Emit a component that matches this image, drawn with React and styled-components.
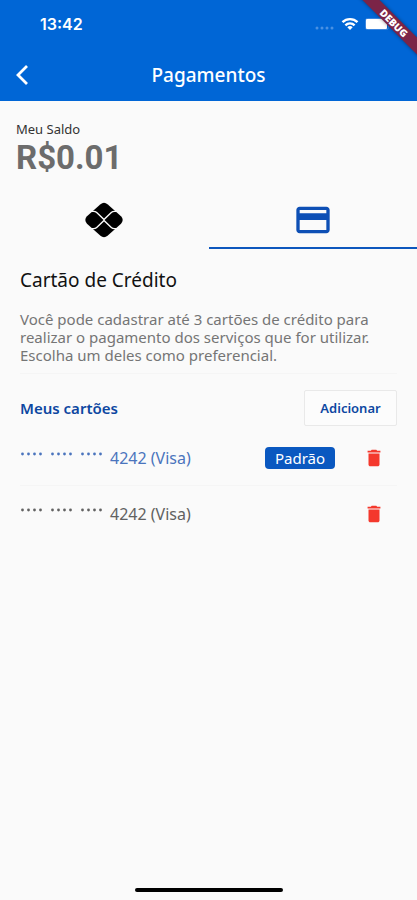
import React, { useState } from 'react';
import styled, { createGlobalStyle } from 'styled-components';
import { MdCreditCard, MdDelete } from 'react-icons/md';

const GlobalStyle = createGlobalStyle`
  * {
    box-sizing: border-box;
  }

  body {
    margin: 0;
    background: #fafafa;
    font-family: 'Noto Sans', 'Open Sans', sans-serif;
  }

  button {
    font-family: inherit;
    cursor: pointer;
  }

  h1, h2, h3, p, ul {
    margin: 0;
    padding: 0;
    font-weight: 400;
  }
`;

const StyledScreen = styled.div`
  position: relative;
  display: flex;
  flex-direction: column;
  min-height: 100vh;
  overflow: hidden;
  background: #fafafa;
`;

const StyledHeader = styled.header`
  background: #0066d6;
  color: white;
`;

const StyledStatusBar = styled.div`
  display: flex;
  align-items: center;
  justify-content: space-between;
  height: 48px;
  padding: 0 28px 0 40px;
`;

const StyledTime = styled.time`
  font-family: Inter, sans-serif;
  font-size: 16px;
  font-weight: 600;
`;

const StyledIndicators = styled.div`
  display: flex;
  align-items: center;
  gap: 6px;
`;

const StyledAppBar = styled.div`
  display: grid;
  grid-template-columns: 44px 1fr 44px;
  align-items: center;
  height: 53px;
`;

const StyledBackButton = styled.button`
  display: flex;
  align-items: center;
  justify-content: center;
  height: 44px;
  padding: 0;
  color: white;
  background: none;
  border: none;
`;

const StyledPageTitle = styled.h1`
  font-size: 19px;
  font-weight: 500;
  line-height: 24px;
  text-align: center;
`;

const StyledRibbon = styled.div`
  position: absolute;
  top: 17px;
  right: -37px;
  width: 120px;
  color: white;
  background: #7b2447;
  box-shadow: 0 0 4px rgba(0, 0, 0, 0.4);
  font-size: 10px;
  font-weight: 900;
  line-height: 12px;
  text-align: center;
  transform: rotate(45deg);
`;

const StyledBalance = styled.section`
  padding: 19px 16px 0;
`;

const StyledBalanceLabel = styled.p`
  color: #333;
  font-size: 13px;
  line-height: 18px;
`;

const StyledBalanceValue = styled.p`
  color: #6c6c6c;
  font-family: Roboto, sans-serif;
  font-size: 33px;
  font-weight: 700;
  line-height: 39px;
`;

const StyledTabs = styled.div`
  display: grid;
  grid-template-columns: 1fr 1fr;
  margin-top: 16px;
`;

const StyledTab = styled.button`
  display: flex;
  align-items: center;
  justify-content: center;
  height: 56px;
  padding: 0;
  color: ${(props) => (props.$color)};
  background: none;
  border: none;
  border-bottom: 2px solid ${(props) => (props.$selected ? '#0d57bd' : 'transparent')};
`;

const StyledContent = styled.main`
  padding: 19px 20px 0;
`;

const StyledSectionTitle = styled.h2`
  color: #111;
  font-size: 19px;
  line-height: 24px;
`;

const StyledDescription = styled.p`
  margin-top: 18px;
  padding-bottom: 9px;
  color: #757575;
  font-size: 15px;
  line-height: 18px;
  border-bottom: 1px solid #f5f5f5;
`;

const StyledListHeader = styled.div`
  display: flex;
  align-items: center;
  justify-content: space-between;
  padding-top: 16px;
`;

const StyledListTitle = styled.h3`
  color: #0d47a1;
  font-size: 15px;
  font-weight: 600;
  line-height: 20px;
`;

const StyledAddButton = styled.button`
  width: 93px;
  height: 36px;
  padding: 0;
  color: #0d47a1;
  background: #fcfcfc;
  border: 1px solid #e9e9e9;
  border-radius: 2px;
  font-size: 13px;
  font-weight: 600;
`;

const StyledCardList = styled.ul`
  padding-top: 5px;
  list-style-type: none;
`;

const StyledCardRow = styled.li`
  display: flex;
  align-items: center;
  height: 55px;
  color: ${(props) => (props.$preferred ? '#4a74bd' : '#616161')};
  font-size: 16px;
  line-height: 20px;

  &:not(:last-child) {
    border-bottom: 1px solid #f5f5f5;
  }
`;

const StyledCardNumber = styled.span`
  display: flex;
  flex: 1;
  gap: 6px;
`;

const StyledMask = styled.span`
  display: flex;
  align-items: center;
  gap: 6px;
  height: 12px;
`;

const StyledBadge = styled.span`
  width: 70px;
  margin-right: 28px;
  color: white;
  background: #0a58c0;
  border-radius: 4px;
  font-size: 15px;
  line-height: 22px;
  text-align: center;
`;

const StyledDeleteButton = styled.button`
  display: flex;
  margin-right: 12px;
  padding: 0;
  color: #f4382c;
  background: none;
  border: none;
`;

const StyledHomeIndicator = styled.div`
  width: 148px;
  height: 4px;
  margin: auto auto 8px;
  background: black;
  border-radius: 2px;
`;

function BackIcon() {
  return (
    <svg width="14" height="22" viewBox="0 0 14 22" fill="none" stroke="currentColor" strokeWidth="2.8">
      <path d="M12 2 3 11l9 9" />
    </svg>
  )
}

function SignalIcon() {
  return (
    <svg width="20" height="18" viewBox="0 0 20 18" fill="#4a91e3">
      {[2, 7, 12, 17].map((x) => <circle key={x} cx={x} cy="13" r="1.5" />)}
    </svg>
  )
}

function WifiIcon() {
  return (
    <svg width="18" height="14" viewBox="0 0 18 14" fill="none" stroke="white" strokeWidth="2.4">
      <path d="M1.5 5.2a10.6 10.6 0 0 1 15 0" />
      <path d="M4.4 8.3a6.5 6.5 0 0 1 9.2 0" />
      <path d="M9 13 6.3 10.3a3.8 3.8 0 0 1 5.4 0z" fill="white" stroke="none" />
    </svg>
  )
}

function BatteryIcon() {
  return (
    <svg width="24" height="12" viewBox="0 0 24 12">
      <rect x="0.5" y="0.5" width="23" height="11" rx="2" fill="none" stroke="#3c86df" />
      <rect x="1" y="1" width="21" height="10" rx="1" fill="white" />
    </svg>
  )
}

function PixIcon() {
  return (
    <svg width="38" height="36" viewBox="0 0 38 36">
      <path
        d="M15.2 2.4q3.8-3.4 7.6 0L36 14.3q3.4 3.7 0 7.4L22.8 33.6q-3.8 3.4-7.6 0L2 21.7q-3.4-3.7 0-7.4z"
        fill="black"
      />
      <g fill="none" stroke="#fafafa" strokeWidth="1.4">
        <path d="M5 9.4h3.6q1.8 0 3.1 1.2L19 17.6l7.3-7q1.3-1.2 3.1-1.2H33" />
        <path d="M5 26.6h3.6q1.8 0 3.1-1.2L19 18.4l7.3 7q1.3 1.2 3.1 1.2H33" />
      </g>
    </svg>
  )
}

function MaskedNumber() {
  return (
    <StyledMask>
      {[0, 1, 2].map((group) => (
        <svg key={group} width="24" height="4" viewBox="0 0 24 4" fill="currentColor">
          {[2, 8, 14, 20].map((x) => <circle key={x} cx={x + 0.5} cy="2" r="1.4" />)}
        </svg>
      ))}
    </StyledMask>
  )
}

function CardRow({ card, onDelete }) {
  return (
    <StyledCardRow $preferred={card.preferred}>
      <StyledCardNumber>
        <MaskedNumber />
        {card.digits} ({card.brand})
      </StyledCardNumber>
      {card.preferred && <StyledBadge>Padrão</StyledBadge>}
      <StyledDeleteButton aria-label="Remover cartão" onClick={() => onDelete(card.id)}>
        <MdDelete size={22} />
      </StyledDeleteButton>
    </StyledCardRow>
  )
}

function App() {
  const [tab, setTab] = useState('card');
  const [cards, setCards] = useState([
    { id: 1, digits: '4242', brand: 'Visa', preferred: true },
    { id: 2, digits: '4242', brand: 'Visa', preferred: false },
  ]);

  const removeCard = (id) => setCards(cards.filter((card) => card.id !== id));

  return (
    <StyledScreen>
      <GlobalStyle />
      <StyledHeader>
        <StyledStatusBar>
          <StyledTime>13:42</StyledTime>
          <StyledIndicators>
            <SignalIcon />
            <WifiIcon />
            <BatteryIcon />
          </StyledIndicators>
        </StyledStatusBar>
        <StyledAppBar>
          <StyledBackButton aria-label="Voltar">
            <BackIcon />
          </StyledBackButton>
          <StyledPageTitle>Pagamentos</StyledPageTitle>
        </StyledAppBar>
      </StyledHeader>
      <StyledRibbon>DEBUG</StyledRibbon>

      <StyledBalance>
        <StyledBalanceLabel>Meu Saldo</StyledBalanceLabel>
        <StyledBalanceValue>R$0.01</StyledBalanceValue>
      </StyledBalance>

      <StyledTabs role="tablist">
        <StyledTab
          role="tab"
          aria-label="Pix"
          aria-selected={tab === 'pix'}
          $color="black"
          $selected={tab === 'pix'}
          onClick={() => setTab('pix')}
        >
          <PixIcon />
        </StyledTab>
        <StyledTab
          role="tab"
          aria-label="Cartão"
          aria-selected={tab === 'card'}
          $color="#0d4fb5"
          $selected={tab === 'card'}
          onClick={() => setTab('card')}
        >
          <MdCreditCard size={40} />
        </StyledTab>
      </StyledTabs>

      <StyledContent>
        <StyledSectionTitle>Cartão de Crédito</StyledSectionTitle>
        <StyledDescription>
          Você pode cadastrar até 3 cartões de crédito para realizar o pagamento
          dos serviços que for utilizar. Escolha um deles como preferencial.
        </StyledDescription>
        <StyledListHeader>
          <StyledListTitle>Meus cartões</StyledListTitle>
          <StyledAddButton>Adicionar</StyledAddButton>
        </StyledListHeader>
        <StyledCardList>
          {cards.map((card) => (
            <CardRow key={card.id} card={card} onDelete={removeCard} />
          ))}
        </StyledCardList>
      </StyledContent>

      <StyledHomeIndicator />
    </StyledScreen>
  )
}

export default App;
